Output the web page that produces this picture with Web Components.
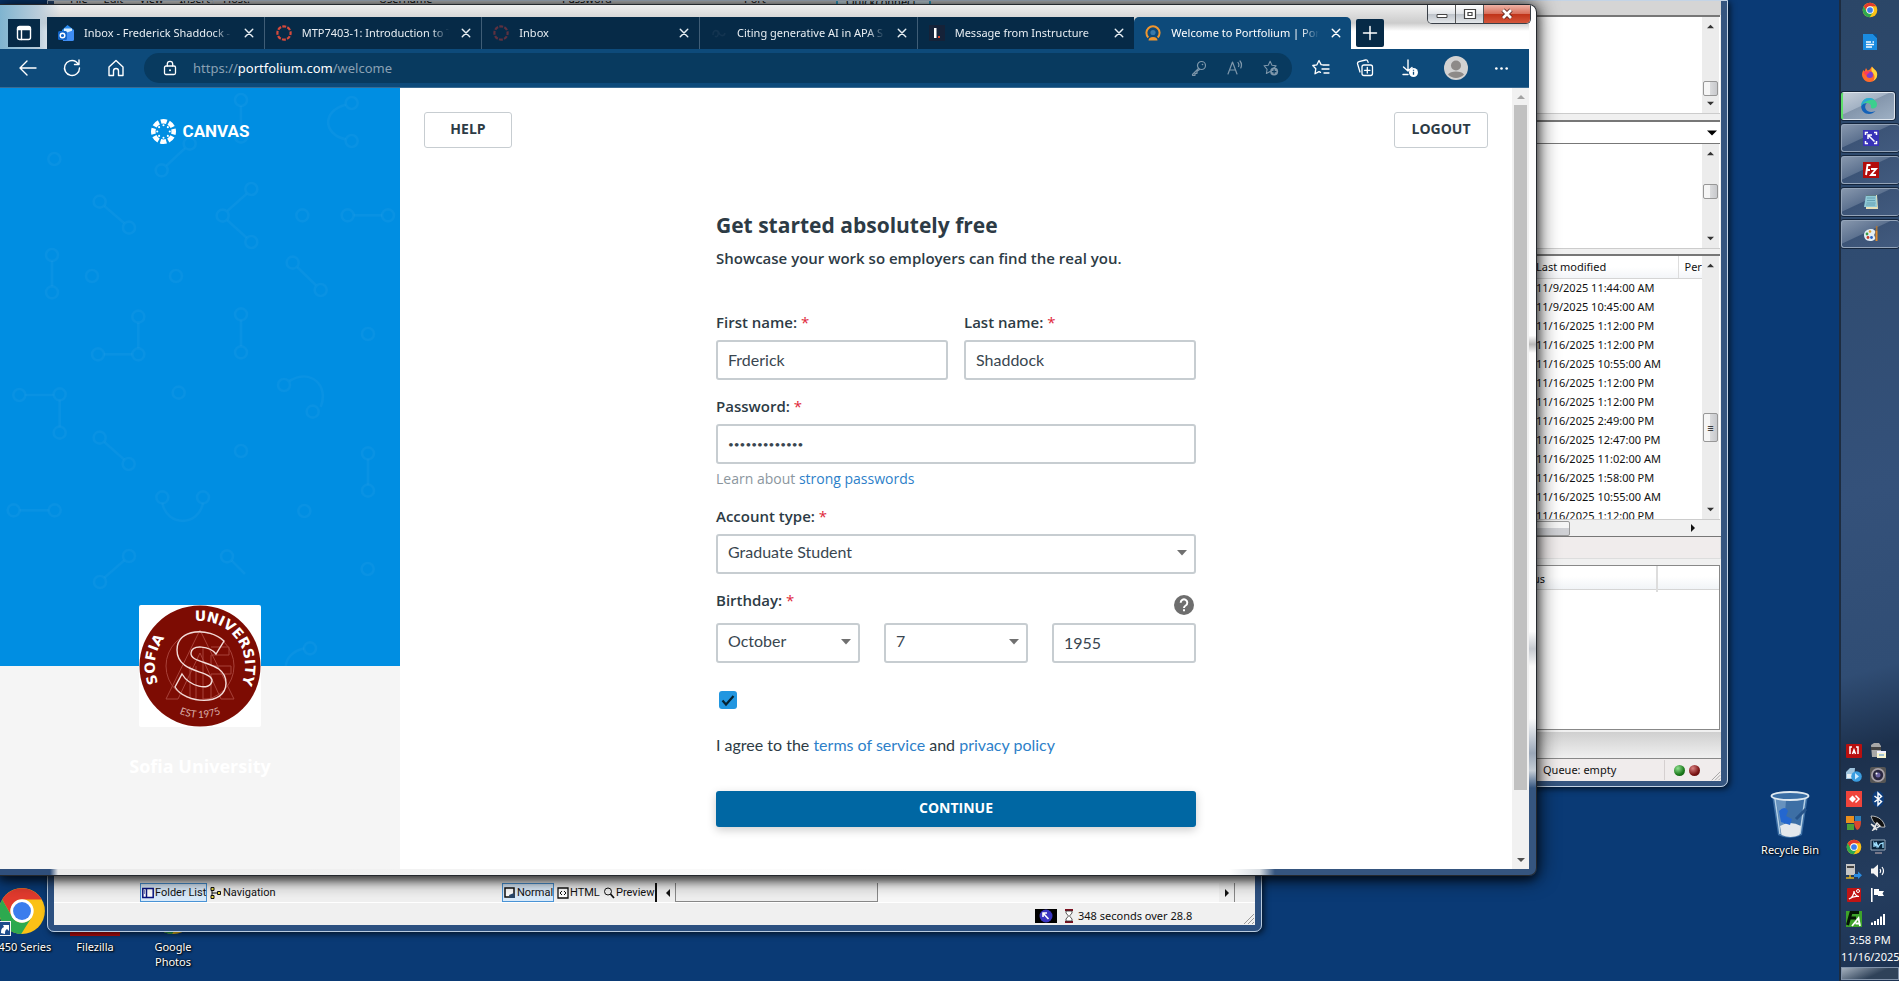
<!DOCTYPE html>
<html lang="en">
<head>
<meta charset="utf-8">
<title>Welcome to Portfolium</title>
<style>
html,body{margin:0;height:100%;overflow:hidden}
body{font:11px/16px "Noto Sans","Open Sans",sans-serif;color:#111}
</style>
</head>
<body>
<desk-top></desk-top>
<script>
const define = (name, css, html) => {
  const t = document.createElement('template');
  t.innerHTML = `<style>*{box-sizing:border-box}${css}</style>${html}`;
  customElements.define(name, class extends HTMLElement {
    constructor() {
      super();
      this.attachShadow({ mode: 'open' }).append(t.content.cloneNode(true));
    }
  });
};

/* ---------- icons ---------- */
const line = 'fill="none" stroke="currentColor" stroke-linecap="round" stroke-linejoin="round"';
const ring = c => `<circle cx="8" cy="8" r="6.6" fill="none" stroke="${c}" stroke-width="2.2" stroke-dasharray="3.9 1.28" stroke-dashoffset="1.9"/>`;
const chrome = `<circle cx="12" cy="12" r="11" fill="#fbc116"/><path d="M21.5 6.5H12a5.5 5.5 0 0 0-4.8 8.3L2.5 6.5A11 11 0 0 1 21.500 6.500z" fill="#e33b2e"/><path d="M2.500 6.500A11 11 0 0 0 11.600 23l5.200-8.300A5.500 5.500 0 0 1 7.200 14.700z" fill="#2da94f"/><circle cx="12" cy="12" r="5.600" fill="#fff"/><circle cx="12" cy="12" r="4.300" fill="#3b7ded"/>`;
const ICONS = {
  panel: ['0 0 16 16', `<rect x="1.500" y="1.500" width="13" height="13" rx="2" ${line} stroke-width="1.400"/><path d="M1.500 4.500h13M5.500 4.500v10" ${line} stroke-width="1.400"/><path d="M2 2h12v2H2z" fill="currentColor"/>`],
  mail: ['0 0 16 16', `<path d="M4 5 9.500 0 16 5v9a2 2 0 0 1-2 2H5z" fill="#2b8cf0"/><path d="M6 3.500h8V10H6z" fill="#d9efff"/><path d="m5 9 11-4v9a2 2 0 0 1-2 2H5z" fill="#3f8df5"/><rect y="6" width="9" height="9" rx="1.500" fill="#1265c9"/><circle cx="4.500" cy="10.500" r="2.300" fill="none" stroke="#fff" stroke-width="1.400"/>`],
  ringRed: ['0 0 16 16', ring('#d64a3c')],
  ringDim: ['0 0 16 16', ring('#5d3140')],
  apa: ['0 0 16 16', `<path d="M2 10c0-6 5-5 6-2s5 4 6 0M4 11c2 2 4-1 3-4" fill="none" stroke="#133450" stroke-width="1.600"/>`],
  instr: ['0 0 16 16', `<path d="M0 0h16v16H0z" fill="#152238"/><path d="M5 3h2.500v10H5z" fill="#fff"/><path d="M9 11h2v2H9z" fill="#e4482d"/>`],
  folium: ['0 0 16 16', `<path d="M3.300 12.500a6.600 6.600 0 1 1 9.400 0" fill="none" stroke="#f0962e" stroke-width="2"/><circle cx="8" cy="7.500" r="2.600" fill="#3a79a8"/><path d="M3.500 15.500a4.500 3.600 0 0 1 9 0z" fill="#f0962e"/>`],
  close: ['0 0 16 16', `<path d="m3 3 10 10M13 3 3 13" ${line} stroke-width="1.900"/>`],
  plus: ['0 0 16 16', `<path d="M8 1.500v13M1.500 8h13" ${line} stroke-width="1.500"/>`],
  back: ['0 0 20 20', `<path d="M18 10H2.500M9 3l-7 7 7 7" ${line} stroke-width="1.400"/>`],
  reload: ['0 0 20 20', `<path d="M17.500 10A7.500 7.500 0 1 1 14 3.700L16.500 6M17 2v4.500h-4.500" ${line} stroke-width="1.400"/>`],
  home: ['0 0 20 20', `<path d="M3 9 10 2.500 17 9v8.500h-4.500V13a2.500 2.500 0 0 0-5 0v4.500H3z" ${line} stroke-width="1.400"/>`],
  lock: ['0 0 16 16', `<rect x="2.500" y="6" width="11" height="8.500" rx="1.500" ${line} stroke-width="1.300"/><path d="M5.300 6V4a2.700 2.700 0 0 1 5.400 0v2" ${line} stroke-width="1.300"/><circle cx="8" cy="10.200" r="1" fill="currentColor"/>`],
  key: ['0 0 16 16', `<circle cx="10.500" cy="5.500" r="4" ${line} stroke-width="1.200"/><circle cx="11.500" cy="4.500" r=".8" fill="currentColor"/><path d="m7.500 8.300-6 6v1h2.500v-2h2v-2l2.500-1.800" ${line} stroke-width="1.200"/>`],
  read: ['0 0 16 16', `<path d="m1 14 4.500-12L10 14M2.700 10h5.600M11 2.500q1.500 2 .5 4M13 1q2.500 3 .8 7" ${line} stroke-width="1.200"/>`],
  starAdd: ['0 0 18 18', `<path d="m8 1.500 2.100 4.300 4.700.7-3.400 3.300M8 13l-4.200 2.200.8-4.700L1.200 6.500l4.700-.7L8 1.500" ${line} stroke-width="1.200"/><circle cx="12.500" cy="13" r="4.500" fill="currentColor"/><path d="M12.500 10.500v5M10 13h5" stroke="#083a5f" stroke-width="1.300"/>`],
  starList: ['0 0 18 18', `<path d="M11 5.800 9.100 5.600 7 1.500 4.900 5.800.8 6.500l3 3.300-.8 5 4-2.200 1.500.8M11 6h6M10 10h7M12 14h5" ${line} stroke-width="1.300"/>`],
  collect: ['0 0 18 18', `<rect x="6" y="6" width="10.500" height="10.500" rx="2" ${line} stroke-width="1.300"/><path d="M11.300 8.500v5.500M8.500 11.300H14M4 13 1.600 5A2 2 0 0 1 3 2.600L9.500 1a2 2 0 0 1 2.300 1.400l.3 1" ${line} stroke-width="1.300"/>`],
  down: ['0 0 18 18', `<path d="M8 1v11M3.500 8 8 12l4-3.500M3 15.500h5" ${line} stroke-width="1.400"/><circle cx="13.500" cy="13.500" r="4.500" fill="#fff"/><path d="M13.500 12.800v3M13.500 10.800v1" stroke="#0d4a7a" stroke-width="1.300"/>`],
  avatar: ['0 0 24 24', `<circle cx="12" cy="12" r="12" fill="#d2d2d2"/><circle cx="12" cy="9.500" r="5" fill="#8d8a88"/><path d="M4 18.500c2-4 14-4 16 0-4 4.500-12 4.500-16 0z" fill="#8d8a88"/>`],
  dots: ['0 0 16 16', `<g fill="currentColor"><circle cx="2.500" cy="8" r="1.400"/><circle cx="8" cy="8" r="1.400"/><circle cx="13.500" cy="8" r="1.400"/></g>`],
  help: ['0 0 20 20', `<circle cx="10" cy="10" r="10" fill="#6e6e6e"/><path d="M6.700 7.700a3.300 3.300 0 1 1 5 2.800C10.400 11.300 10 11.800 10 13" fill="none" stroke="#fff" stroke-width="2"/><path d="M9 14.300h2v2H9z" fill="#fff"/>`],
  chrome: ['0 0 24 24', chrome],
  writer: ['0 0 16 16', `<path d="M1 0h10l4 4v12H1z" fill="#1a8be0"/><path d="M11 0h4v4z" fill="#0b4f8c"/><path d="M4 8h5M4 10.500h8M4 13h6M10.500 8H12" stroke="#fff" stroke-width="1.300"/>`],
  firefox: ['0 0 16 16', `<path d="M8 16A7.600 7.600 0 0 1 1.500 4l1 1.500L4 2l1.500 2.500C8 4 8.500 2 10 .5c.5 2 4 3 5 6.500 1 5-3 9-7 9z" fill="#ff6a2a"/><path d="M10 .5c.5 2 4 3 5 6.500.8 4-1.500 7-4 8 2-2 2.500-6-1-9-1-2-.5-4 0-5.500z" fill="#ffd43a"/><circle cx="7.700" cy="8.800" r="3.300" fill="#7a3fd0"/><path d="M2 6c2-1 4-1 6 1-2 0-3 1-3 2.500C3 9 2 8 2 6z" fill="#ff3b5c"/>`],
  edge: ['0 0 16 16', `<path d="M.3 8.500C0 3 4 0 8 0c5 0 8 3.500 8 6.500 0 3-2.500 4-4.500 4-1.500 0-2-.8-1.500-1.700C10.500 7 8.500 5 6 5 3 5 .8 6.500.3 8.500z" fill="#3ccf8e"/><path d="M.3 8.500C0 3 4 0 8 0c2 0 4 .6 5.300 1.800C9 1 3 3 .3 8.500z" fill="#2aa7d6"/><path d="M.2 8.500C1 6 3.500 5 6 5c-2 1.500-2.500 4-1 6.500 1.500 2.300 5 3.300 9.500 1.500C12.500 15 10.500 16 8 16 3.500 16 .2 12.500.2 8.500z" fill="#1361b8"/>`],
  shrink: ['0 0 16 16', `<path d="M0 0h16v16H0z" fill="#3733b8"/><path d="M2.500 5V2.500H5M11 2.500h2.500V5M13.500 11v2.500H11M5 13.500H2.500V11M5 5l6.500 6.500M5 9V5h4" fill="none" stroke="#fff" stroke-width="1.500"/>`],
  fz: ['0 0 16 16', `<path d="M0 0h16v16H0z" fill="#b30c0c"/><path d="M7.500 3H4.500L3 13M3.600 8H7M8 7h5l-5 6h5" fill="none" stroke="#fff" stroke-width="1.900"/>`],
  notepad: ['0 0 16 16', `<path d="m3 2 11-1 1 14H3z" fill="#e9e2b8"/><path d="M3 1h10l1 12H1z" fill="#8fc9d6"/><path d="M4 4h8M4 6.500h8M3.500 9h9M3 11h9" stroke="#5a97a8" stroke-width=".8"/><path d="M4 1v1M6 1v1M8 1v1M10 1v1M12 1v1" stroke="#333"/>`],
  paint: ['0 0 16 16', `<path d="M1 9c0-4 4-6 7-6s5 2 4 4-1 2 0 4-1 4-5 4-6-3-6-6z" fill="#e3edf4"/><circle cx="4" cy="8" r="1.400" fill="#3a9b45"/><circle cx="7" cy="5.500" r="1.300" fill="#e0a030"/><circle cx="5" cy="11.500" r="1.400" fill="#c23a2b"/><circle cx="8.500" cy="11.500" r="1.400" fill="#2b62c2"/><path d="M12.500 5h2v10h-2z" fill="#e08a2c"/><path d="M12.500 5 13 0h1.500v5z" fill="#a8763c"/>`],
  adobe: ['0 0 16 16', `<rect width="16" height="14" y="1" rx="1" fill="#b80f0f"/><path d="M4 11V4h2M12 11V4h-2M6.500 11 8 7l1.500 4" fill="none" stroke="#fff" stroke-width="1.500"/>`],
  fax: ['0 0 16 16', `<path d="M1 2 4 0h5l2 3v11H2z" fill="#a8a8a8"/><path d="M1 4h10v3H1z" fill="#444"/><path d="M7 8h9v7H7z" fill="#f7f3cf"/><path d="M7 8h9v2H7z" fill="#eef"/><path d="M9 12h5" stroke="#4a90d9"/>`],
  disc: ['0 0 16 16', `<path d="M0 5 4 1h5l-1 11H0z" fill="#9fc4de"/><path d="M1 7h6v4H1z" fill="#e8eef2"/><circle cx="10.500" cy="9.500" r="5.300" fill="#3a9de0"/><path d="m9 6 4 3.500-4 3z" fill="#cfeaff"/>`],
  cam: ['0 0 16 16', `<rect width="16" height="16" rx="2" fill="#555"/><circle cx="8" cy="8" r="7" fill="#a8a2a8"/><circle cx="8" cy="8" r="5.200" fill="#2a2740"/><circle cx="8" cy="8" r="2.500" fill="#6a62a0"/><circle cx="6.500" cy="6.500" r="1" fill="#fff"/>`],
  anydesk: ['0 0 16 16', `<path d="M0 0h16v16H0z" fill="#ef443b"/><path d="m6.500 4.500 3.500 3.500-3.500 3.500L3 8z" fill="#fff"/><path d="M9.500 4.500 13 8l-3.500 3.500" fill="none" stroke="#fff" stroke-width="1.500"/>`],
  bt: ['0 0 16 16', `<ellipse cx="8" cy="8" rx="6" ry="8" fill="#0e3e7d"/><path d="m4.500 5 7 5.500L8 14V2l3.500 3.500-7 5.500" fill="none" stroke="#fff" stroke-width="1.500"/>`],
  shield: ['0 0 16 16', `<path d="M0 1h8v7H0z" fill="#e98f1d"/><path d="M9 1h6v5H9z" fill="#2e7fb8"/><path d="M1 9h7v6H1z" fill="#4aa03a"/><path d="M8 6h7c0 5-1 8-4 9-2-2-3-5-3-9z" fill="#d9482d"/>`],
  dish: ['0 0 16 16', `<path d="M1 1c8 0 13 5 14 11-6 1-12-3-14-11z" fill="#111" stroke="#ddd" stroke-width=".8"/><path d="m1 9 6 6M3 15l4-7 3 3zM1 9l5 3" stroke="#e8e8e8" fill="none" stroke-width="1.400"/>`],
  screen: ['0 0 16 16', `<path d="M1 1h14v10H1z" fill="#07243c" stroke="#9ab"/><path d="M4 8V4l2 3V3l2 5 2-3 3-1v5" fill="none" stroke="#9fe0ff" stroke-width="1.300"/><path d="M5 13h7v2H5z" fill="#778"/>`],
  server: ['0 0 16 16', `<path d="M0 1h9v11H0z" fill="#c5c5c5"/><path d="M1 3h7v2H1z" fill="#444"/><path d="M4 12v3M0 15h8" stroke="#e0b020" stroke-width="1.500"/><path d="M8 11h4V8.500l4 3.800-4 3.700V14H8z" fill="#2a8be0"/>`],
  sound: ['0 0 16 16', `<path d="M1 5.500h2.500L8 1.500v13l-4.500-4H1z" fill="#f4f4f4"/><path d="M10 6q1.500 2 0 4M12 4q3 4 0 8" fill="none" stroke="#fff" stroke-width="1.200"/>`],
  pdf: ['0 0 16 16', `<rect x="1" y="1" width="14" height="14" rx="1" fill="#c01414"/><path d="M3 12c3-1 5-5 5-8 0 3 3 5.500 5 5.500-3-.5-7 0-10 2.500z" fill="none" stroke="#fff" stroke-width="1.200"/><circle cx="12" cy="4" r="1.500" fill="none" stroke="#fff"/>`],
  flag: ['0 0 16 16', `<path d="M1 1h1.600v14H1zM4 2h5v2h5l-1.500 2.500L14 9H8V8H4z" fill="#fff"/>`],
  fa: ['0 0 16 16', `<path d="M0 0h16v16H0z" fill="#3da32a"/><path d="M13 1.500H5L1.500 14M3.500 7H10" fill="none" stroke="#061506" stroke-width="3"/><path d="m6 15 6.500-8L14 15M9.500 12.500h4" fill="none" stroke="#fff" stroke-width="1.800"/>`],
  signal: ['0 0 16 16', `<path d="M1 11.500h2V14H1zM4 10h2v4H4zM7 8h2v6H7zM10 5.500h2V14h-2zM13 3h2v11h-2z" fill="#fff"/>`],
  up: ['0 0 8 8', `<path d="M0 6 4 2l4 4z" fill="currentColor"/>`],
  dn: ['0 0 8 8', `<path d="M0 2l4 4 4-4z" fill="currentColor"/>`],
  lf: ['0 0 8 8', `<path d="M6 0 2 4l4 4z" fill="currentColor"/>`],
  rt: ['0 0 8 8', `<path d="M2 0l4 4-4 4z" fill="currentColor"/>`],
  folders: ['0 0 12 12', `<path d="M.8 1.500h10.400v9H.8zM4.500 1v10" fill="#fff" stroke="#0a1580" stroke-width="1.500"/><path d="M2 4h1M2 6h1" stroke="#0a1580"/>`],
  nav: ['0 0 12 12', `<path d="M2 2v8M2 6h7" stroke="#111" fill="none"/><path d="M1 .5h3v3H1zM1 8.500h3v3H1zM7.500 4.500h3v3h-3z" fill="#f0e040" stroke="#111"/>`],
  page: ['0 0 12 12', `<path d="M1 1h9v9H1z" fill="#fff" stroke="#111" stroke-width="1.500"/><path d="m5 8 5-2 1 5H6z" fill="#26466a"/>`],
  code: ['0 0 12 12', `<path d="M1 1h10v10H1z" fill="#fff" stroke="#111" stroke-width="1.300"/><path d="m5 4-2 2 2 2M7 4l2 2-2 2" fill="none" stroke="#111"/>`],
  loupe: ['0 0 12 12', `<circle cx="5" cy="4.500" r="3.500" fill="none" stroke="#111"/><path d="m7.500 7 3.500 4" stroke="#111" stroke-width="1.800"/>`],
  glass: ['0 0 10 14', `<path d="M1 1h8M1 13h8" stroke="#7a1020" stroke-width="2"/><path d="M2 2h6v2L5.500 7 8 10v2H2v-2l2.500-3L2 4z" fill="#fff" stroke="#333" stroke-width=".8"/>`],
  shot: ['0 0 22 14', `<path d="M0 0h22v14H0z" fill="#000"/><circle cx="11" cy="7" r="6.500" fill="#3a35c0"/><path d="m8 4 5.500 6M8 8V4h4" fill="none" stroke="#fff" stroke-width="1.600"/>`],
  grip: ['0 0 12 12', `<path d="M11 1 1 11M11 5l-6 6M11 9l-2 2" stroke="#999" stroke-width="1"/>`],
  bin: ['0 0 40 48', `<path d="M2 4h36l-6 40q-12 6-24 0z" fill="#5f93c4" opacity=".6"/><path d="M5 8 10 43M35 8l-5 35" stroke="#b5d0e6" stroke-width="1.500"/><path d="M6 9h10l-2 26H10z" fill="#a7c8e3" opacity=".4"/><path d="M10 35q10-6 21 0l-1.500 9q-9 4-18 0z" fill="#e4e8ec"/><path d="M9 20q6-6 9 0l-2 5 6 3-2 6-9-3z" fill="#2467cf"/><path d="m26 28 10-10" stroke="#27548a" stroke-width="3"/><ellipse cx="20" cy="5" rx="18.500" ry="4" fill="#3a6ea5" stroke="#dfe9f1" stroke-width="1.800"/>`],
  canvas: ['0 0 24 24', `<circle cx="12" cy="12" r="9.800" fill="none" stroke="#fff" stroke-width="4.400" stroke-dasharray="5.700 2" stroke-dashoffset="2.850"/><g fill="#fff"><circle cx="12" cy="6" r="1"/><circle cx="12" cy="18" r="1"/><circle cx="6" cy="12" r="1"/><circle cx="18" cy="12" r="1"/><circle cx="7.800" cy="7.800" r="1"/><circle cx="16.200" cy="7.800" r="1"/><circle cx="7.800" cy="16.200" r="1"/><circle cx="16.200" cy="16.200" r="1"/></g>`]
};
customElements.define('ui-icon', class extends HTMLElement {
  connectedCallback() {
    if (this.shadowRoot) return;
    const [box, body] = ICONS[this.getAttribute('name')];
    this.attachShadow({ mode: 'open' }).innerHTML =
      `<style>:host{display:block;flex:none;width:16px;height:16px}svg{display:block;width:100%;height:100%}</style><svg viewBox="${box}" aria-hidden="true">${body}</svg>`;
  }
});
const icon = (n, cls = '') => `<ui-icon name="${n}" class="${cls}"></ui-icon>`;

/* ---------- browser ---------- */
define('edge-tab', `
:host{flex:1;min-width:0;display:flex;align-items:center;gap:10px;padding:0 8px 0 11px;height:32px;background:#062a47;color:#e8eef3;position:relative}
:host(:not(:first-child):not([active])){border-left:1px solid #3f5d76}
:host([active]){background:#0d4a7a;border-radius:5px 5px 0 0;color:#fff}
.t{flex:1;min-width:0;overflow:hidden;white-space:nowrap;mask-image:linear-gradient(90deg,#000 88%,transparent)}
button{all:unset;width:14px;height:14px;display:grid;place-items:center}
button ui-icon{width:12px;height:12px}`,
`<slot name="icon"></slot><span class="t"><slot></slot></span><button aria-label="Close tab">${icon('close')}</button>`);

define('form-field', `:host{display:flex;flex-direction:column;min-width:0;gap:9px}`, `<slot name="label"></slot><slot></slot>`);

const arrow = `url("data:image/svg+xml,%3Csvg xmlns='http://www.w3.org/2000/svg' width='10' height='6'%3E%3Cpath d='M0 0h10L5 5.500z' fill='%23707070'/%3E%3C/svg%3E")`;
const tick = `url("data:image/svg+xml,%3Csvg xmlns='http://www.w3.org/2000/svg' viewBox='0 0 18 18'%3E%3Cpath d='m3.500 9.500 3.500 4L14.500 5' fill='none' stroke='%23062333' stroke-width='2.200'/%3E%3C/svg%3E")`;
define('signup-form', `
:host{display:block;width:480px;max-width:100%;margin:64px auto 0;color:#2d3b45}
h1{margin:0;font:bold 21px/26px "Open Sans",sans-serif}
p{margin:0}
.sub{font:600 15px/22px "Open Sans",sans-serif;margin:9px 0 44px}
form{display:block}
label{font:600 15px/18px "Open Sans",sans-serif}
label i{font-style:normal;font-weight:400;color:#e0263a}
input,select{font:16px/20px Lato,sans-serif;color:#394650;width:100%;height:40px;padding:0 10px 2px;margin:0;border:2px solid #c7cdd1;border-radius:3px;background:#fff;appearance:none;outline:0}
input[type=password]{font-size:10px;padding-bottom:0}
select{padding-bottom:4px;background:#fff ${arrow} no-repeat right 7px top 14px}
.row{display:grid;grid-template-columns:1fr 1fr;gap:16px;margin-bottom:17px}
.hint{font:500 14px/18px "Open Sans",sans-serif;color:#8b969e;margin:6px 0 19px}
.one{margin-bottom:17px}
a{color:#2d7fc9;text-decoration:none}
.head{display:flex;justify-content:space-between;height:25px;margin-bottom:7px}
.head ui-icon{width:20px;height:20px;margin:4px 2px 0 0}
.date{display:grid;grid-template-columns:repeat(3,1fr);gap:24px;margin-bottom:28px}
.chk{display:block;width:18px;height:18px;padding:0;margin:0 0 25px 3px;border:0;background:#2196e0 ${tick}}
.agree{font:16px/22px Lato,sans-serif;margin-bottom:35px}
.go{display:block;width:100%;height:36px;padding:0 0 2px;border:0;border-radius:3px;background:#0067a3;color:#fff;font:bold 14px/20px "Open Sans",sans-serif;box-shadow:0 3px 10px #0003}`,
`<h1>Get started absolutely free</h1>
<p class="sub">Showcase your work so employers can find the real you.</p>
<form>
<div class="row">
<form-field><label slot="label" for="fn">First name: <i>*</i></label><input id="fn" value="Frderick"></form-field>
<form-field><label slot="label" for="ln">Last name: <i>*</i></label><input id="ln" value="Shaddock"></form-field>
</div>
<form-field><label slot="label" for="pw">Password: <i>*</i></label><input id="pw" type="password" value="abcdefghijklm"></form-field>
<p class="hint">Learn about <a href="#">strong passwords</a></p>
<form-field class="one"><label slot="label" for="ac">Account type: <i>*</i></label><select id="ac"><option>Graduate Student</option></select></form-field>
<div class="head"><label for="mo">Birthday: <i>*</i></label>${icon('help')}</div>
<div class="date"><select id="mo"><option>October</option></select><select aria-label="Day"><option>7</option></select><input aria-label="Year" value="1955"></div>
<input class="chk" type="checkbox" checked aria-labelledby="ag">
<p class="agree" id="ag">I agree to the <a href="#">terms of service</a> and <a href="#">privacy policy</a></p>
<button class="go" type="button">CONTINUE</button>
</form>`);

const dots = [[723,90],[723,200],[1055,99],[1055,213],[163,267],[569,221],[485,301],[299,395],[387,473],[754,357],[668,437],[754,516],[907,436],[1043,436],[1164,436],[156,555],[156,667],[276,618],[528,618],[878,578],[962,660],[415,740],[415,853],[294,853],[723,733],[723,847],[1104,792],[58,975],[179,973],[179,1088],[536,968],[852,945],[938,1025],[299,1103],[386,1182],[723,1143],[1104,1150],[1104,1262],[41,1321],[164,1321],[487,1282],[609,1282],[913,1323],[387,1458],[300,1536],[681,1459],[1103,1497],[930,1735]];
define('brand-panel', `
:host{display:flex;flex-direction:column;flex:none;width:400px;background:#f5f5f5}
.blue{flex:1;background:#008ee2;position:relative;overflow:hidden;display:flex;justify-content:center;align-items:flex-start;padding-top:31px}
.bg{position:absolute;inset:0;width:100%;height:100%}
.logo{position:relative;display:flex;align-items:center;gap:7px;color:#fff;font:bold 17px/25px Roboto,sans-serif}
.logo ui-icon{width:25px;height:25px}
.low{flex:none;height:203px;display:flex;flex-direction:column;align-items:center}
.seal{position:relative;width:122px;height:122px;margin-top:-61px;background:#fff;border-radius:2px}
h2{margin:27px 0 0;font:bold 18px/24px "Open Sans",sans-serif;color:#fff}`,
`<div class="blue"><svg class="bg" viewBox="0 54 1200 1734" preserveAspectRatio="xMidYMin slice" fill="none" stroke="#fff" stroke-opacity=".035" stroke-width="8">
${dots.map(([x, y]) => `<circle cx="${x}" cy="${y}" r="18"/>`).join('')}
<path d="M723 108v74M1037 104c-70 18-70 88 0 104M555 235l-56 52M313 408l60 52M740 371l-58 52M682 451l58 52M1061 436h85M156 573v76M892 592l56 54M415 758v77M397 853h-85M723 751v78M76 975h85M179 991v79M868 933c65-40 120 15 94 78M313 1116l60 53M1104 1168v76M59 1321h87M487 1300c15 70 107 70 122 0M373 1471l-60 52M695 1472l40 40M912 1735c-40 10-55 35-55 60"/></svg>
<div class="logo">${icon('canvas')}<span>CANVAS</span></div></div>
<div class="low"><svg class="seal" viewBox="0 0 122 122" role="img" aria-label="Sofia University seal">
<defs><path id="s1" d="M19.500 79A45.200 45.200 0 1 1 102.500 79"/><path id="base" d="M16 87a52 52 0 0 0 90 0"/></defs>
<circle cx="61" cy="61" r="60.500" fill="#7d0c03"/>
<g fill="none" stroke="#a8423a" stroke-width="1"><path d="m61 25 34 69H82L61 48 39 94H27z"/><circle cx="61" cy="61" r="34"/><path d="M72 42h18v8H72v11h20v8H72v25h-8V42"/><path d="M51 61v33h6V61"/></g>
<path d="M77 49c-6-8-24-10-25-1-1 12 35 7 35 30 0 24-41 21-51 4l7-13c7 12 28 18 30 7 1-11-35-7-35-31 0-22 32-23 47-9z" fill="none" stroke="#f3dcd9" stroke-width="1.400"/>
<g fill="#fff" font-family="DejaVu Sans,sans-serif" font-weight="bold" font-size="14"><text><textPath href="#s1" startOffset="1">SOFIA</textPath></text><text text-anchor="end"><textPath href="#s1" startOffset="100%">UNIVERSITY</textPath></text></g>
<text fill="#d9aba6" font-family="Lato,sans-serif" font-size="10" text-anchor="middle"><textPath href="#base" startOffset="50%">EST 1975</textPath></text></svg>
<h2>Sofia University</h2></div>`);

define('browser-window', `
:host{display:flex;flex-direction:column;overflow:hidden;border:1px solid #24282d;border-left:0;border-radius:0 8px 8px 0;padding:0 7px 6px 0;box-shadow:0 0 20px 2px #000b,0 4px 8px #0008;
background:linear-gradient(90deg,#2f4f7c 0 50px,#e9e9e9 58px,#fff 60% 80%,#d8dde2 82%,#35557f 83%) 0 100%/100% 7px no-repeat,linear-gradient(#fdfdfd 0 38%,#b9b9b9 39%,#fdfdfd 40% 72%,#c5c9cf 74%,#fafafa 76% 82%,#9aa7b8 86%,#c5cdd6 88%,#35557f 90%) 100% 0/7px 100% no-repeat,linear-gradient(90deg,#7fb4d0 0,#b9ccda 38px,#fff0 60px),linear-gradient(#eee,#ccc 18px,#fff 26px)}
.tabs{display:flex;align-items:flex-end;height:44px;flex:none}
.sq{all:unset;background:#062a47;color:#fff;height:28px;display:grid;place-items:center;flex:none}
.sq.ws{width:32px;margin:0 7px 2px 8px}
.sq.add{width:28px;margin:0 145px 2px 5px;border-radius:2px}
.set{flex:1;display:flex;min-width:0}
.cap{position:absolute;top:0;right:5px;display:flex;border:1px solid #3a4048;border-top:0;border-radius:0 0 5px 5px;overflow:hidden}
.cap button{all:unset;width:27px;height:18px;display:grid;place-items:center;background:linear-gradient(#fff,#dfe2e6 50%,#bcc2c9 50%,#e4e7ea);border-right:1px solid #555}
.cap .x{width:46px;background:linear-gradient(#efb2a5,#d8705c 48%,#bf3218 50%,#d5563b);border:0;color:#fff}
.cap svg{width:14px;height:12px}
.bar{flex:none;height:39px;background:#0d4a7a;color:#fff;display:flex;align-items:center;padding:0 20px 0 18px;border-bottom:1px solid #3a6b92}
.bar>ui-icon{width:20px;height:20px;margin-right:24px}
.addr{flex:1;height:30px;border-radius:15px;background:#083a5f;display:flex;align-items:center;padding:0 13px 0 18px;margin-left:-6px;margin-right:20px;min-width:0;gap:20px}
.url{flex:1;font-size:13px;line-height:18px;color:#8aa1b4;margin-left:-5px;white-space:nowrap}
.url b{font-weight:400;color:#fff}
.addr .g{color:#7e97ab}
.bar .r{width:18px;height:18px;margin-right:26px}
.bar .av{width:24px;height:24px;margin-right:26px}
.bar .mo{width:15px;height:15px;margin:0}
.view{flex:1;min-height:0;display:flex;background:#fff}
main{flex:1;min-width:0;padding:24px}
.top{display:flex;justify-content:space-between}
.top button{font:bold 14px/20px "Open Sans",sans-serif;color:#2d3b45;background:#fff;border:1px solid #c7cdd1;border-radius:3px;height:36px;width:88px;padding:0 0 2px}
.top button+button{width:94px}
.sb{flex:none;width:17px;background:#f1f1f1;display:flex;flex-direction:column;align-items:center;justify-content:space-between;padding:5px 0;color:#505050}
.sb ui-icon{width:8px;height:8px;color:#a3a3a3}.sb ui-icon:last-child{color:#505050}
.thumb{width:13px;flex:1;background:#c1c1c1;margin:4px 0 66px}`,
`<div class="tabs"><button class="sq ws" aria-label="Tab actions">${icon('panel')}</button><div class="set">
<edge-tab><ui-icon slot="icon" name="mail"></ui-icon>Inbox - Frederick Shaddock -</edge-tab>
<edge-tab><ui-icon slot="icon" name="ringRed"></ui-icon>MTP7403-1: Introduction to T</edge-tab>
<edge-tab><ui-icon slot="icon" name="ringDim"></ui-icon>Inbox</edge-tab>
<edge-tab><ui-icon slot="icon" name="apa"></ui-icon>Citing generative AI in APA S</edge-tab>
<edge-tab><ui-icon slot="icon" name="instr"></ui-icon>Message from Instructure</edge-tab>
<edge-tab active><ui-icon slot="icon" name="folium"></ui-icon>Welcome to Portfolium | Por</edge-tab>
</div><button class="sq add" aria-label="New tab">${icon('plus')}</button></div>
<div class="cap"><button aria-label="Minimize"><svg viewBox="0 0 14 12"><path d="M2 6.500h10v3H2z" fill="#fff" stroke="#444"/></svg></button><button aria-label="Maximize"><svg viewBox="0 0 14 12"><path d="M1.500 1.500h11v9h-11zM5 4.500h4v3H5z" fill="#fff" stroke="#444" stroke-width="1.200"/></svg></button><button class="x" aria-label="Close"><svg viewBox="0 0 14 12"><path d="m3 2 8 8M11 2l-8 8" stroke="#5a2018" stroke-width="4.500"/><path d="m3 2 8 8M11 2l-8 8" stroke="#fff" stroke-width="2.800"/></svg></button></div>
<div class="bar">${icon('back')}${icon('reload')}${icon('home')}
<div class="addr">${icon('lock')}<div class="url" role="textbox" aria-label="Address">https://<b>portfolium.com</b>/welcome</div>${icon('key', 'g')}${icon('read', 'g')}${icon('starAdd', 'g')}</div>
${icon('starList', 'r')}${icon('collect', 'r')}${icon('down', 'r')}${icon('avatar', 'av')}${icon('dots', 'mo')}</div>
<div class="view"><brand-panel></brand-panel><main><div class="top"><button>HELP</button><button>LOGOUT</button></div><signup-form></signup-form></main>
<div class="sb">${icon('up')}<div class="thumb"></div>${icon('dn')}</div></div>`);

/* ---------- FTP client ---------- */
define('scroll-bar', `
:host{display:flex;flex-direction:column;align-items:center;width:17px;background:#ececec;padding:6px 0;flex:none}
.r{flex:var(--before,1)}.s{flex:var(--after,1)}
.t{width:15px;height:var(--size,15px);border:1px solid #979797;border-radius:2px;background:linear-gradient(90deg,#f5f5f5 50%,#d9dadc 50%,#c8c9cc);flex:none;display:grid;place-items:center;line-height:8px}
ui-icon{width:7px;height:7px;color:#333}`,
`${icon('up')}<div class="r"></div><div class="t"><slot></slot></div><div class="s"></div>${icon('dn')}`);

const times = ['11/9/2025 11:44:00 AM','11/9/2025 10:45:00 AM','11/16/2025 1:12:00 PM','11/16/2025 1:12:00 PM','11/16/2025 10:55:00 AM','11/16/2025 1:12:00 PM','11/16/2025 1:12:00 PM','11/16/2025 2:49:00 PM','11/16/2025 12:47:00 PM','11/16/2025 11:02:00 AM','11/16/2025 1:58:00 PM','11/16/2025 10:55:00 AM','11/16/2025 1:12:00 PM'];
define('ftp-window', `
:host{display:flex;flex-direction:column;background:#f0f0f0;border:solid #35557f;border-width:0 7px 6px 0;border-radius:0 0 7px 0;outline:1px solid #c4d4e6;outline-offset:-1px;box-shadow:2px 2px 6px #000a}
.q{height:15px;flex:none;overflow:hidden;display:grid;grid-template-columns:156px 183px 182px 92px 95px 1fr;padding-left:10px;line-height:14px;background:#d5d5d5}
.q span{margin-top:-8px}.q button{all:unset;margin-top:-8px;padding-left:8px;height:16px;border:2px solid #38b4e0;background:#d9ecf5}
.pane{display:flex;justify-content:flex-end;background:#fff;border-top:2px solid #777;flex:none;margin-right:1px;padding-right:1px;border-bottom:1px solid #ccc}
.p1{height:99px}
.combo{height:24px;margin-top:6px;align-items:center;padding-right:3px;border-bottom:1px solid #777}
.combo ui-icon{width:10px;height:10px;color:#000}
.p2{height:105px;border-top:0}
.list{margin-top:5px;height:266px}
.clip{overflow:hidden;display:flex;justify-content:flex-end;flex:1}
table{border-collapse:collapse;table-layout:fixed;width:169px;height:max-content}
th{font-weight:400;text-align:left;height:22px;padding:0 0 0 6px;background:linear-gradient(#fff 50%,#f3f5f8);border-bottom:1px solid #d5d5d5}
th:first-child{width:145px;border-right:1px solid #ddd;padding-left:3px}
td{padding:0 0 0 3px;height:19px;line-height:18px;white-space:nowrap}
.h{height:17px;display:flex;justify-content:flex-end;align-items:center;gap:119px;padding-right:24px;flex:none;border-bottom:1px solid #777}
.h i{width:40px;height:15px;border:1px solid #999;border-radius:2px;background:linear-gradient(#f5f5f5 50%,#cfd0d4 50%)}
.h ui-icon{width:8px;height:8px}
.note{height:22px;background:#f0ecec;border:1px solid #ddd;border-width:0 1px 1px 0;flex:none}
.queue{margin:6px 1px 0 0;border:1px solid #888;border-left:0;background:#fff;flex:1;min-height:0}
.qh{height:24px;display:grid;grid-template-columns:1fr 61px;background:linear-gradient(#fff 45%,#f1f4f7);border-bottom:1px solid #d5d5d5;line-height:26px}
.qh span{text-align:right;padding-right:111px;border-right:2px solid #ddd}
.low{height:27px;background:linear-gradient(#cfcfcf,#f0f0f0);border-bottom:1px solid #888;flex:none;margin-top:2px}
.st{height:22px;display:flex;justify-content:flex-end;align-items:center;flex:none;line-height:20px;background:#f0ecec}
.st span{width:122px;margin-right:9px;border-right:1px solid #d5d0d0}.st b{width:11px;height:11px;border-radius:50%;margin-right:4px;background:radial-gradient(circle at 35% 30%,#8fe08f,#1c7a1c 60%,#0c4a0c)}
.st b+b{background:radial-gradient(circle at 35% 30%,#d98080,#7a1414 60%,#4a0808);margin-right:11px}
.st ui-icon{width:10px;height:10px;align-self:flex-end}`,
`<div class="q"><span>Host:</span><span>Username</span><span>Password</span><span>Port</span><button>Quickconnect</button></div>
<div class="pane p1"><scroll-bar style="--before:12;--after:1"></scroll-bar></div>
<div class="pane combo">${icon('dn')}</div>
<div class="pane p2"><scroll-bar style="--before:3;--after:4"></scroll-bar></div>
<div class="pane list"><div class="clip"><table><thead><tr><th>Last modified</th><th>Per</th></tr></thead><tbody>${times.map(t => `<tr><td>${t}</td><td></td></tr>`).join('')}</tbody></table></div><scroll-bar style="--before:9;--after:4;--size:29px">≡</scroll-bar></div>
<div class="h"><i></i>${icon('rt')}</div><div class="note"></div>
<div class="queue"><div class="qh"><span>us</span></div></div>
<div class="low"></div>
<div class="st"><span>Queue: empty</span><b></b><b></b>${icon('grip')}</div>`);

/* ---------- page editor ---------- */
define('editor-window', `
:host{display:flex;flex-direction:column;justify-content:space-between;background:#f0f0f0;border:solid #2c5080;border-width:0 7px;border-bottom-width:7px;border-radius:0 0 7px 7px;outline:1px solid #b9cce0;outline-offset:-1px;box-shadow:2px 2px 6px #000a}
.m{display:flex;gap:16px;padding-left:16px;height:5px;overflow:hidden;line-height:14px;background:#e4e4e4}
.m span{margin-top:-8px}
.b{display:flex;align-items:stretch;height:20px;padding-left:86px;border-bottom:1px solid #fff;font-family:Roboto,sans-serif}
.b button{all:unset;display:flex;align-items:center;gap:1px;padding:0 0 0 1px;white-space:nowrap;box-sizing:border-box}
.b .on{border:1px solid #4a94d6;background:#d9eafa}
.b ui-icon{width:12px;height:12px}
.n{width:362px;display:flex;gap:2px}
.n .on{width:67px}
.v{display:flex;gap:2px;width:155px;margin-right:3px;border-right:2px solid #111}
.v .on{width:52px}.v button:nth-child(2){width:44px}
.b .a{width:16px;justify-content:center;padding:0;border-right:1px solid #888}
.a ui-icon{width:8px;height:8px}
.tr{flex:1;background:#f8f8f8;display:flex}
.tr i{width:202px;background:#efefef;border:1px solid #888;border-width:0 1px 1px 0}
.rest{width:20px}
.s{height:22px;padding-top:4px;display:flex;justify-content:flex-end;align-items:center;gap:4px}
.s span{width:177px;white-space:nowrap}
.s ui-icon:nth-child(1){width:22px;height:14px}.s ui-icon:nth-child(2){width:10px;height:14px;margin:0 0 0 3px}
.s ui-icon:last-child{width:12px;height:12px;align-self:flex-end;margin-left:-16px}`,
`<div class="m"><span>File</span><span>Edit</span><span>View</span><span>Insert</span></div>
<div><div class="b"><div class="n"><button class="on">${icon('folders')}Folder List</button><button>${icon('nav')}Navigation</button></div>
<div class="v"><button class="on">${icon('page')}Normal</button><button>${icon('code')}HTML</button><button>${icon('loupe')}Preview</button></div>
<button class="a" aria-label="Scroll left">${icon('lf')}</button><div class="tr"><i></i></div><button class="a" aria-label="Scroll right">${icon('rt')}</button><div class="rest"></div></div>
<div class="s">${icon('shot')}${icon('glass')}<span>348 seconds over 28.8</span>${icon('grip')}</div></div>`);

/* ---------- desktop ---------- */
define('desktop-icon', `
:host{display:flex;flex-direction:column;align-items:center;color:#fff;text-align:center;line-height:15px;text-shadow:1px 1px 2px #000,0 0 2px #000;gap:3px}`,
`<slot name="icon"></slot><span><slot></slot></span>`);

define('task-bar', `
:host{display:flex;flex-direction:column;flex:none;width:60px;position:relative;overflow:hidden;color:#fff;border-left:2px solid;border-image:linear-gradient(90deg,#1d2c40 50%,#8497af 50%) 2;background:linear-gradient(165deg,#2b4667 0,#34517a 50%,#304d74 68%,#1c304c 76%,#243d5f 90%,#1c3150 100%)}
nav{display:flex;flex-direction:column;margin-top:-6px}
nav button{all:unset;height:28px;margin:2px 0;display:grid;place-items:center;box-sizing:border-box}
nav .w{border:1px solid #93a3b8;border-right:0;border-radius:3px;background:linear-gradient(155deg,#8797ad 0,#5d7290 42%,#3c5477 44%,#425b7f);box-shadow:0 0 0 1px #14253c}
nav .on{background:linear-gradient(155deg,#c6cfd9,#a3b2c4 42%,#8496ac 44%,#9eb0c4);border:1px solid #dfe6ee;border-left:2px solid #5fe06a;margin-right:4px}
.tray{margin-top:auto;display:grid;grid-template-columns:24px 24px;grid-auto-rows:24px;place-items:center;padding-left:1px}
time{text-align:center;line-height:17px;white-space:nowrap;margin-bottom:2px}
.peek{all:unset;height:13px;margin-bottom:1px;border:1px solid #8293aa;background:linear-gradient(155deg,#a5b1bf,#2f4259 60%);box-sizing:border-box}`,
`<nav><button aria-label="Chrome">${icon('chrome')}</button><button aria-label="Writer">${icon('writer')}</button><button aria-label="Firefox">${icon('firefox')}</button>
<button class="w on" aria-label="Edge">${icon('edge')}</button><button class="w" aria-label="Capture">${icon('shrink')}</button><button class="w" aria-label="Filezilla">${icon('fz')}</button><button class="w" aria-label="Notepad">${icon('notepad')}</button><button class="w" aria-label="Paint">${icon('paint')}</button></nav>
<div class="tray">${['adobe','fax','disc','cam','anydesk','bt','shield','dish','chrome','screen','server','sound','pdf','flag','fa','signal'].map(n => icon(n)).join('')}</div>
<time>3:58 PM<br>11/16/2025</time><button class="peek" aria-label="Show desktop"></button>`);

define('desk-top', `
:host{display:flex;height:100vh;background:#0a3a75;overflow:hidden}
.area{flex:1;position:relative;min-width:0;overflow:hidden}
.area>*{position:absolute}
editor-window{inset:0 577px 49px 47px}
ftp-window{inset:0 111px 194px 213px}
browser-window{inset:4px 302px 105px 0}
.bin{right:14px;bottom:124px;width:70px}
.bin ui-icon{width:40px;height:48px}
.c1{left:-16px;top:886px;width:76px}.c2{left:57px;top:886px;width:76px}.c3{left:135px;top:886px;width:76px}
.c1 ui-icon,.c2 ui-icon,.c3 ui-icon{width:50px;height:50px}
.sc{left:0;top:921px;width:11px;height:15px;background:#f4f4f4}
.sc svg{display:block;width:11px;height:15px}`,
`<div class="area">
<desktop-icon class="c1"><ui-icon slot="icon" name="chrome"></ui-icon>F450 Series</desktop-icon>
<div class="sc"><svg viewBox="0 0 11 15"><path d="M0 1h10v13H0z" fill="#1d4c8c"/><path d="M1 12c0-4 1-5 3-6L3 4h6v6L7 8c-2 1-2 3-2 5z" fill="#fff"/></svg></div>
<desktop-icon class="c2"><ui-icon slot="icon" name="fz"></ui-icon>Filezilla</desktop-icon>
<desktop-icon class="c3"><ui-icon slot="icon" name="chrome"></ui-icon>Google<br>Photos</desktop-icon>
<desktop-icon class="bin"><ui-icon slot="icon" name="bin"></ui-icon>Recycle Bin</desktop-icon>
<editor-window></editor-window><ftp-window></ftp-window><browser-window></browser-window>
</div><task-bar></task-bar>`);
</script>
</body>
</html>
